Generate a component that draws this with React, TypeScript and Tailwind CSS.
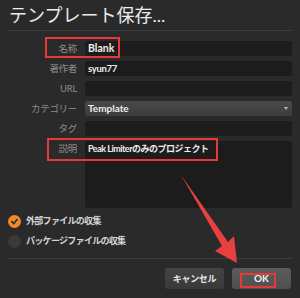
import React from "react";

const font = { fontFamily: 'Lato, "Noto Sans CJK JP", sans-serif' };

function Row({ label, children }: { label: string; children: React.ReactNode }) {
  return (
    <div className="flex items-start gap-[8px]">
      <div className="w-[69px] shrink-0 text-right text-[9.5px] tracking-[-0.3px] leading-[15px] text-[#8c8c8c]">{label}</div>
      <div className="flex-1">{children}</div>
    </div>
  );
}

function Input({ value, h = "h-[15px]", cls = "text-[10px]" }: { value?: string; h?: string; cls?: string }) {
  return (
    <div className={`${h} ${cls} rounded-[3px] bg-[#1c1c1c] pl-[3px] leading-[15px] font-bold text-[#eeeeee]`}>
      {value}
    </div>
  );
}

export default function App() {
  return (
    <div className="relative w-[300px] h-[298px] overflow-hidden bg-[#2a2a2a] px-[8px]" style={font}>
      <div className="h-[31px] flex items-center border-b border-[#3c3c3c] pl-[1px] text-[18px] text-[#ececec]">
        テンプレート保存...
      </div>
      <div className="mt-[10px] flex flex-col gap-[5px]">
        <Row label="名称"><Input value="Blank" cls="text-[10.5px]" /></Row>
        <Row label="著作者"><Input value="syun77" cls="text-[9.5px] tracking-[-0.3px]" /></Row>
        <Row label="URL"><Input /></Row>
        <Row label="カテゴリー">
          <div className="relative h-[15px] rounded-[3px] bg-gradient-to-b from-[#4a4a4a] to-[#3c3c3c] pl-[3px] text-[10px] leading-[15px] font-bold text-[#eeeeee]">
            Template
            <div className="absolute right-[4px] top-[6px] w-0 h-0 border-l-[2px] border-r-[2px] border-t-[3px] border-l-transparent border-r-transparent border-t-[#bbbbbb]" />
          </div>
        </Row>
        <Row label="タグ"><Input /></Row>
        <Row label="説明"><Input value="Peak Limiterのみのプロジェクト" h="h-[67px]" cls="text-[9px] tracking-[-0.5px]" /></Row>
      </div>
      <div className="mt-[6px] flex flex-col gap-[6px]">
        <div className="flex items-center gap-[5px] h-[14px]">
          <div className="w-[13px] h-[13px] rounded-full bg-[#f0892a] flex items-center justify-center">
            <svg width="9" height="9" viewBox="0 0 10 10">
              <path d="M2 5.2 L4.2 7.3 L8 2.8" fill="none" stroke="#2a2a2a" strokeWidth="1.8" strokeLinecap="round" strokeLinejoin="round" />
            </svg>
          </div>
          <span className="text-[9px] tracking-[-0.7px] font-bold text-[#d4d4d4]">外部ファイルの収集</span>
        </div>
        <div className="flex items-center gap-[5px] h-[14px]">
          <div className="w-[13px] h-[13px] rounded-full bg-[#3a3a3a]" />
          <span className="text-[9px] tracking-[-0.7px] font-bold text-[#d4d4d4]">パッケージファイルの収集</span>
        </div>
      </div>
      <div className="mt-[10px] border-t border-[#3c3c3c] pt-[9px] flex justify-end gap-[8px] pr-[1px]">
        <div className="w-[59px] h-[21px] rounded-[3px] bg-gradient-to-b from-[#444444] to-[#393939] flex items-center justify-center text-[9px] tracking-[-0.3px] font-bold text-[#e6e6e6]">
          キャンセル
        </div>
        <div className="w-[59px] h-[21px] rounded-[3px] bg-gradient-to-b from-[#5c5c5c] to-[#4f4f4f] flex items-center justify-center text-[10px] font-bold text-[#f0f0f0]">
          OK
        </div>
      </div>

      <div className="absolute left-[45px] top-[37px] w-[75px] h-[21px] border-2 border-[#e8393a]" />
      <div className="absolute left-[47px] top-[138px] w-[171px] h-[23px] border-2 border-[#e8393a]" />
      <div className="absolute left-[240px] top-[273px] w-[36px] h-[15px] border-2 border-[#e8393a]" />
      <svg className="absolute left-0 top-0" width="300" height="298" viewBox="0 0 300 298">
        <polygon points="181,175 228,242 234,236 237,263 215,251 222,246" fill="#e8403f" />
      </svg>
    </div>
  );
}
